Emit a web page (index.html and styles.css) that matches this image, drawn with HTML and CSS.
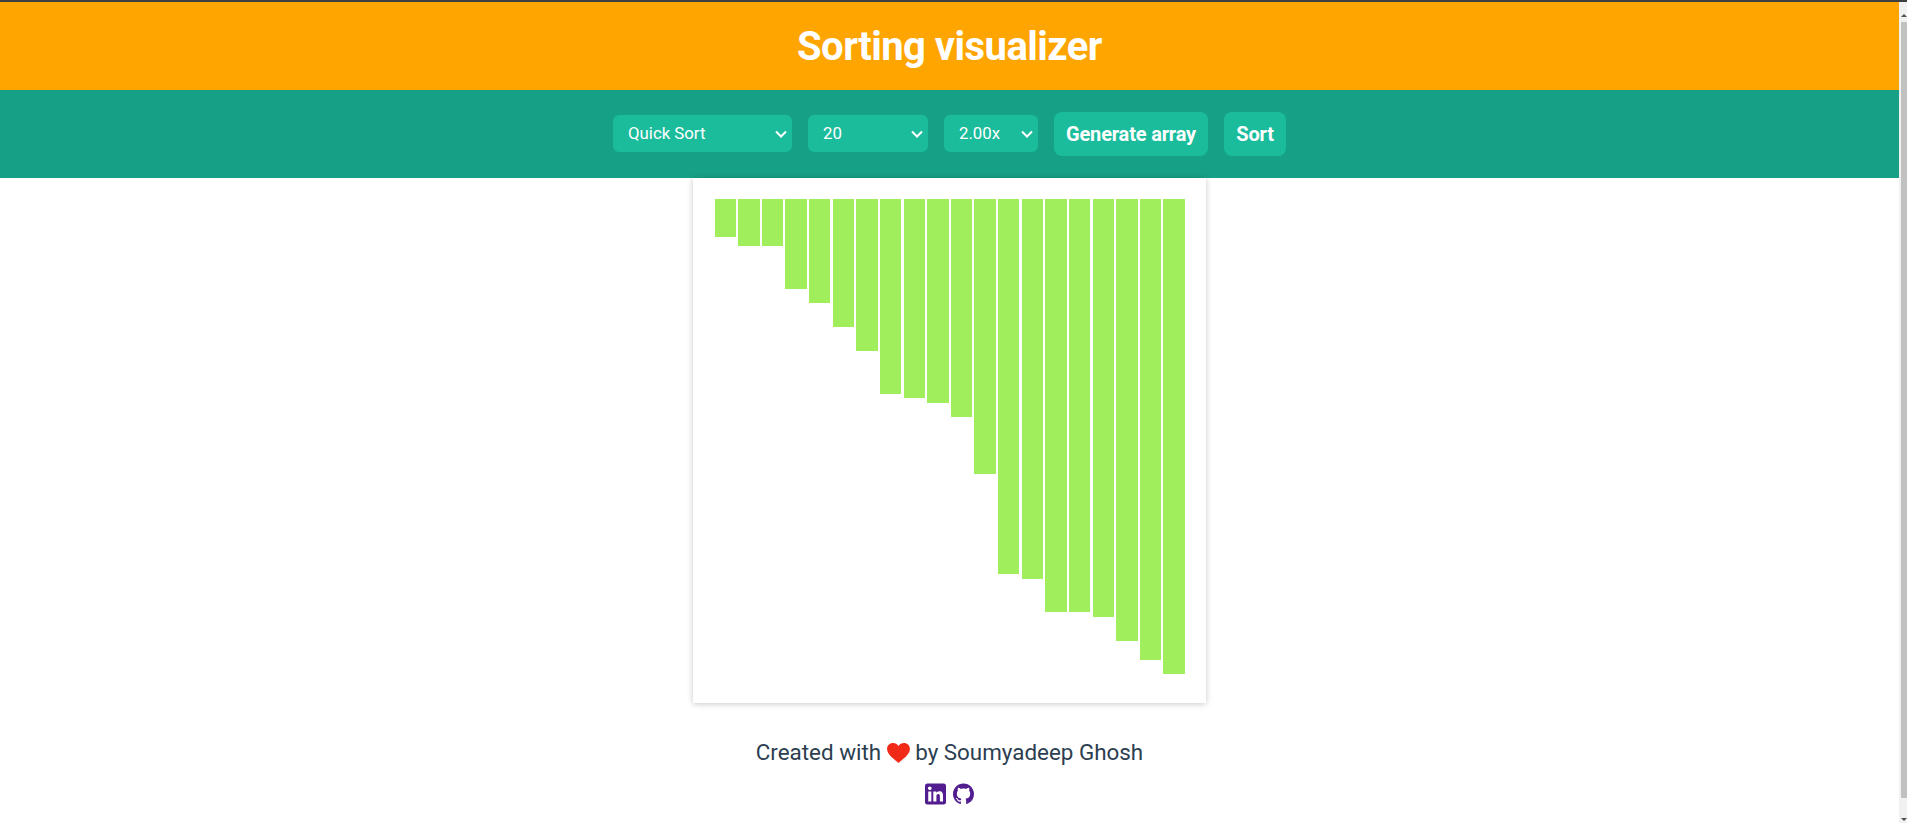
FILE: index.html
```html
<!DOCTYPE html>
<html lang="en">

<head>
  <meta charset="UTF-8">
  <meta name="viewport" content="width=device-width, initial-scale=1.0">
  <title>Sorting visualizer</title>
  <link rel="stylesheet" href="styles.css">
</head>

<body>
  <div class="window">
    <div class="page">
      <header class="title-bar">
        <h1>Sorting visualizer</h1>
      </header>

      <nav class="controls">
        <select class="select select-algo">
          <option>Bubble Sort</option>
          <option>Selection Sort</option>
          <option>Insertion Sort</option>
          <option>Merge Sort</option>
          <option selected>Quick Sort</option>
        </select>
        <select class="select select-size">
          <option>10</option>
          <option selected>20</option>
          <option>30</option>
        </select>
        <select class="select select-speed">
          <option>1.00x</option>
          <option selected>2.00x</option>
          <option>4.00x</option>
        </select>
        <button type="button" class="btn btn-generate">Generate array</button>
        <button type="button" class="btn btn-sort">Sort</button>
      </nav>

      <main class="board">
        <div class="bars" id="bars"></div>
      </main>

      <footer class="credits">
        <p class="credits-line">Created with
          <svg class="heart" viewBox="0 0 24 21" aria-hidden="true">
            <path d="M12 21C9 18 0 12.500 0 6.300 0 2.700 2.800 0 6.300 0 8.700 0 10.800 1.200 12 3.200 13.200 1.200 15.300 0 17.700 0 21.200 0 24 2.700 24 6.300 24 12.500 15 18 12 21z"/>
          </svg>
          by Soumyadeep Ghosh</p>
        <div class="socials">
          <svg class="social" viewBox="0 32 448 448" aria-label="LinkedIn">
            <path d="M400 32H48C21.500 32 0 53.500 0 80v352c0 26.500 21.500 48 48 48h352c26.500 0 48-21.500 48-48V80c0-26.500-21.500-48-48-48zM135.400 416H69V202.200h66.500V416zm-33.200-243c-21.300 0-38.500-17.300-38.500-38.500S80.900 96 102.200 96c21.200 0 38.500 17.300 38.500 38.500 0 21.300-17.200 38.500-38.500 38.500zm282.100 243h-66.400V312c0-24.800-.5-56.700-34.500-56.700-34.600 0-39.900 27-39.900 54.900V416h-66.400V202.200h63.700v29.200h.9c8.900-16.800 30.600-34.500 62.900-34.500 67.200 0 79.700 44.300 79.700 101.900V416z"/>
          </svg>
          <svg class="social" viewBox="0 0 16 16" aria-label="GitHub">
            <path d="M8 0C3.580 0 0 3.580 0 8c0 3.540 2.290 6.530 5.470 7.590.4.07.55-.17.55-.38 0-.19-.01-.82-.01-1.490-2.010.37-2.530-.49-2.690-.94-.09-.23-.48-.94-.82-1.130-.28-.15-.68-.52-.01-.53.63-.01 1.080.58 1.230.82.72 1.210 1.870.87 2.330.66.07-.52.28-.87.51-1.070-1.780-.2-3.640-.89-3.640-3.950 0-.87.31-1.590.82-2.150-.08-.2-.36-1.020.08-2.120 0 0 .67-.21 2.200.82.64-.18 1.320-.27 2-.27.68 0 1.360.09 2 .27 1.530-1.040 2.200-.82 2.200-.82.44 1.100.16 1.920.08 2.120.51.56.82 1.270.82 2.150 0 3.070-1.870 3.750-3.650 3.950.29.25.54.73.54 1.480 0 1.070-.01 1.930-.01 2.200 0 .21.15.46.55.38A8.013 8.013 0 0016 8c0-4.420-3.580-8-8-8z"/>
          </svg>
        </div>
      </footer>
    </div>

    <div class="scrollbar">
      <span class="arrow arrow-up"></span>
      <span class="thumb"></span>
      <span class="arrow arrow-down"></span>
    </div>
  </div>

  <script>
    // alturas de las barras ya ordenadas
    const ALTURAS = [38, 47, 47, 90, 104, 128, 152, 195, 199, 204, 218, 275, 375, 380, 413, 413, 418, 442, 461, 475];
    const BARS = document.getElementById("bars");

    for (let i = 0; i < ALTURAS.length; i++) {
      let barra = document.createElement("span");
      barra.className = "bar";
      barra.style.height = ALTURAS[i] + "px";
      BARS.appendChild(barra);
    }
  </script>
</body>

</html>
```
FILE: styles.css
```css
* {
  box-sizing: border-box;
}

html, body {
  margin: 0;
  padding: 0;
  height: 100%;
  overflow: hidden;
}

body {
  font-family: Roboto, "Liberation Sans", sans-serif;
  background-color: #fff;
  color: #2c3e50;
}

.window {
  display: flex;
  height: 823px;
  border-top: 2px solid #3c4043;
}

.page {
  flex: 1;
  min-width: 0;
}

.title-bar {
  height: 88px;
  display: flex;
  align-items: center;
  justify-content: center;
  background-color: #ffa500;
}

.title-bar h1 {
  margin: 0;
  font-size: 40px;
  font-weight: 700;
  letter-spacing: -0.550px;
  color: #fff;
}

.controls {
  height: 88px;
  display: flex;
  align-items: center;
  justify-content: center;
  gap: 16px;
  background-color: #16a085;
}

.select {
  appearance: none;
  height: 37px;
  margin-bottom: 1px;
  padding: 0 15px 2px;
  border: none;
  border-radius: 6px;
  background-color: #1abc9c;
  background-image: url("data:image/svg+xml,%3Csvg xmlns='http://www.w3.org/2000/svg' width='12' height='8' viewBox='0 0 12 8'%3E%3Cpath d='M1 1.500l5 5 5-5' fill='none' stroke='%23fff' stroke-width='2'/%3E%3C/svg%3E");
  background-repeat: no-repeat;
  background-position: right 5px center;
  color: #fff;
  font-family: inherit;
  font-size: 16.800px;
}

.select-algo {
  width: 179px;
}

.select-size {
  width: 120px;
}

.select-speed {
  width: 94px;
}

.btn {
  height: 44px;
  padding: 0;
  border: none;
  border-radius: 8px;
  background-color: #1abc9c;
  color: #fff;
  font-family: inherit;
  font-size: 20px;
  font-weight: 700;
  letter-spacing: -0.170px;
}

.btn-generate {
  width: 154px;
}

.btn-sort {
  width: 62px;
}

.board {
  width: 513px;
  height: 525px;
  margin: 0 auto;
  padding: 21px 21.100px 0 21.600px;
  box-shadow: 0 1px 6px rgba(0, 0, 0, 0.22);
}

.bars {
  display: flex;
  justify-content: space-between;
  align-items: flex-start;
}

.bar {
  width: 21.300px;
  background-color: #a0ee5c;
}

.credits {
  text-align: center;
}

.credits-line {
  margin: 35px 0 0;
  font-size: 22.400px;
  line-height: 28px;
}

.heart {
  width: 23px;
  height: 20px;
  vertical-align: -3px;
  fill: #f02a17;
}

.socials {
  display: flex;
  justify-content: center;
  gap: 7px;
  margin-top: 17px;
}

.social {
  width: 21px;
  height: 22px;
  fill: #521d8f;
}

.scrollbar {
  width: 8px;
  display: flex;
  flex-direction: column;
  align-items: center;
  background-color: #f1f1f1;
  padding-left: 2px;
}

.arrow {
  width: 0;
  height: 0;
  flex: none;
  border-left: 3px solid transparent;
  border-right: 3px solid transparent;
}

.arrow-up {
  margin: 12px 0 5px;
  border-bottom: 3px solid #505050;
}

.arrow-down {
  margin: auto 0 2px;
  border-top: 3px solid #505050;
}

.thumb {
  width: 6px;
  height: 776px;
  flex: none;
  background-color: #c1c1c1;
}
```
